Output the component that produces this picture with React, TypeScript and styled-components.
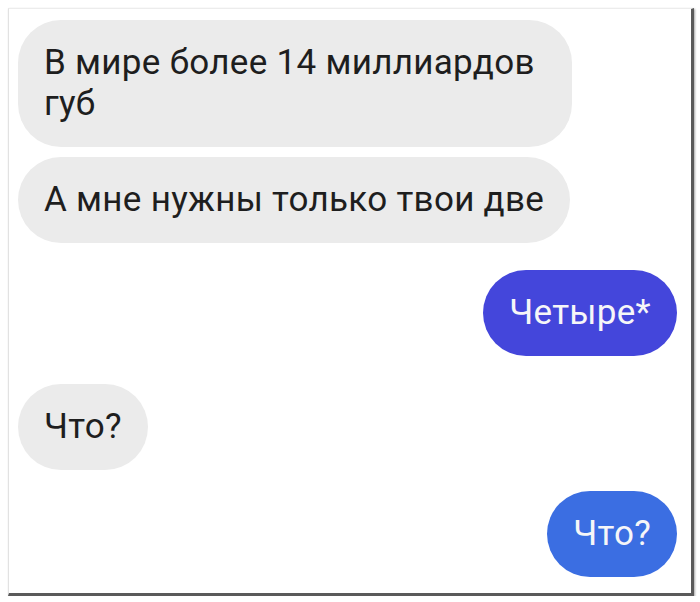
import React from 'react';
import styled, { createGlobalStyle } from 'styled-components';

const GlobalStyle = createGlobalStyle`
  body {
    margin: 0;
    background: #ffffff;
    font-family: Roboto, "Noto Sans", "Liberation Sans", sans-serif;
  }
`;

const Frame = styled.div`
  box-sizing: border-box;
  margin: 8px 0 0 8px;
  width: 686px;
  height: 588px;
  border-left: 1px solid #e2e2e2;
  border-top: 1px solid #ececec;
  border-right: 3px solid #5a5a5a;
  border-bottom: 3px solid #5a5a5a;
  box-shadow: 1px 1px 2px rgba(0, 0, 0, 0.35);
  background: #ffffff;
  padding: 11px 14px 0 9px;
  display: flex;
  flex-direction: column;
`;

const Row = styled.div<{ $mine?: boolean; $gap: number }>`
  display: flex;
  justify-content: ${(p) => (p.$mine ? 'flex-end' : 'flex-start')};
  margin-top: ${(p) => p.$gap}px;
`;

const Bubble = styled.div<{ $tone: 'gray' | 'indigo' | 'blue' }>`
  box-sizing: border-box;
  max-width: 554px;
  padding: 22px 26px 23px;
  border-radius: 43px;
  font-size: 35px;
  line-height: 41px;
  letter-spacing: 0.3px;
  background: ${(p) =>
    p.$tone === 'gray' ? '#ebebeb' : p.$tone === 'indigo' ? '#4446db' : '#3b6ee2'};
  color: ${(p) => (p.$tone === 'gray' ? '#1e1e1e' : '#f6f6f8')};
`;

const messages: { text: string; tone: 'gray' | 'indigo' | 'blue'; gap: number }[] = [
  { text: 'В мире более 14 миллиардов губ', tone: 'gray', gap: 0 },
  { text: 'А мне нужны только твои две', tone: 'gray', gap: 10 },
  { text: 'Четыре*', tone: 'indigo', gap: 27 },
  { text: 'Что?', tone: 'gray', gap: 28 },
  { text: 'Что?', tone: 'blue', gap: 21 },
];

export default function App() {
  return (
    <>
      <GlobalStyle />
      <Frame>
        {messages.map((m, i) => (
          <Row key={i} $mine={m.tone !== 'gray'} $gap={m.gap}>
            <Bubble $tone={m.tone}>{m.text}</Bubble>
          </Row>
        ))}
      </Frame>
    </>
  );
}
